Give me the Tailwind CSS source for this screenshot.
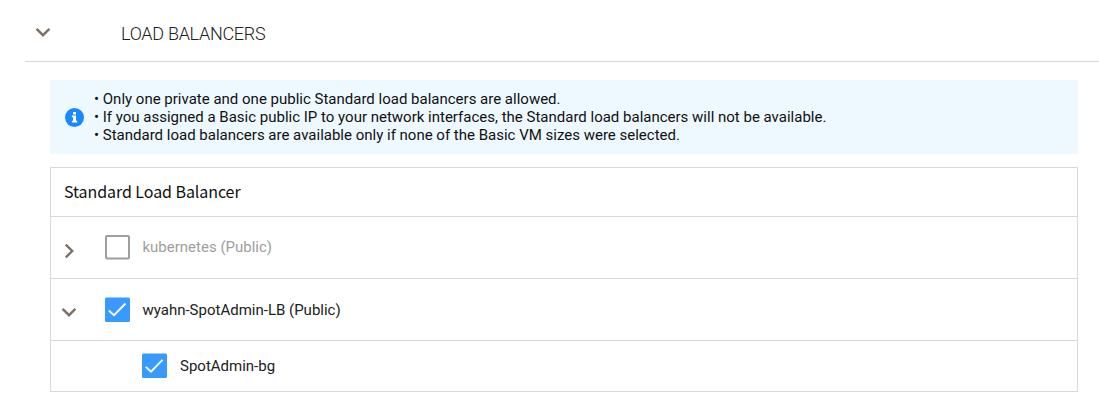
<!DOCTYPE html>
<html lang="en">
<head>
<meta charset="utf-8">
<title>Load Balancers</title>
<script src="https://cdn.jsdelivr.net/npm/@tailwindcss/browser@4"></script>
</head>
<body class="h-[401px] overflow-hidden bg-white font-['Roboto',sans-serif] text-[15px] leading-[18px] text-[#212121]">
<header class="ml-[25px] flex h-[62px] items-center border-b border-[#d9d9d9] pt-[6px] pl-[10px]">
  <svg class="-mt-[3px] h-4 w-4" viewBox="0 0 16 16" fill="none" stroke="#7d7068" stroke-width="2.4"><path d="M1.6 4.8 8 11.2 14.4 4.8"/></svg>
  <h1 class="ml-[70px] text-[18px] leading-6 font-light tracking-[-0.29px] whitespace-nowrap">LOAD BALANCERS</h1>
</header>
<main class="mt-[18px] ml-[50px] w-[1028px]">
  <section class="flex h-[74px] items-center rounded-[3px] bg-[#edf8ff] pl-[15px] text-[#111]">
    <svg class="h-[19px] w-[19px] shrink-0" viewBox="0 0 19 19"><circle cx="9.5" cy="9.5" r="9.5" fill="#1989ff"/><path fill="#fff" d="M8 4h3v2.5H8zM6.9 7.5h4.1v5.3h1.2v1.8H6.9v-1.8h1.2V9.2H6.9z"/></svg>
    <ul class="ml-[10px] whitespace-nowrap">
      <li>• Only one private and one public Standard load balancers are allowed.</li>
      <li>• If you assigned a Basic public IP to your network interfaces, the Standard load balancers will not be available.</li>
      <li>• Standard load balancers are available only if none of the Basic VM sizes were selected.</li>
    </ul>
  </section>
  <section class="mt-[13px] border border-[#d9d9d9]">
    <h2 class="flex h-[49px] items-center border-b border-[#d9d9d9] pb-[2px] pl-[13px] font-['Noto_Sans_CJK_SC',sans-serif] text-[16px] font-normal tracking-[-0.07px] text-[#111]">Standard Load Balancer</h2>
    <div class="flex h-[62px] items-center border-b border-[#d9d9d9] pb-px pl-[10px]">
      <svg class="mt-[7px] h-4 w-4" viewBox="0 0 16 16" fill="none" stroke="#7d7068" stroke-width="2.4"><path d="M4.8 1.6 11.2 8 4.8 14.4"/></svg>
      <svg class="ml-[28px] h-[25px] w-[25px]" viewBox="0 0 25 25"><rect x="1" y="1" width="23" height="22.6" rx="1" fill="none" stroke="#9e9e9e" stroke-width="2"/></svg>
      <span class="ml-[12.5px] text-[#9e9e9e]">kubernetes (Public)</span>
    </div>
    <div class="flex h-[62px] items-center border-b border-[#d9d9d9] pl-[10px]">
      <svg class="mt-[5px] h-4 w-4" viewBox="0 0 16 16" fill="none" stroke="#7d7068" stroke-width="2.4"><path d="M1.6 4.8 8 11.2 14.4 4.8"/></svg>
      <svg class="ml-[28px] h-[25px] w-[25px]" viewBox="0 0 25 25"><rect y=".6" width="25" height="24.4" rx="1.5" fill="#3899ff"/><path d="M3.8 13.5 9 18.2 20.5 6.5" fill="none" stroke="#fff" stroke-width="1.9"/></svg>
      <span class="ml-[12.5px]">wyahn-SpotAdmin-LB (Public)</span>
    </div>
    <div class="flex h-[50px] items-center pl-[91px]">
      <svg class="-mt-px h-[25px] w-[25px]" viewBox="0 0 25 25"><rect y=".5" width="25" height="24.4" rx="1.5" fill="#3899ff"/><path d="M3.8 13.9 9 18.6 20.5 6.9" fill="none" stroke="#fff" stroke-width="1.9"/></svg>
      <span class="ml-[13px]">SpotAdmin-bg</span>
    </div>
  </section>
</main>
</body>
</html>
